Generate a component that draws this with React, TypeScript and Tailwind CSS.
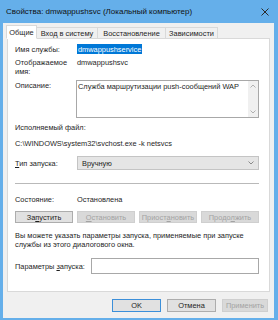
import React from "react";

const Btn = ({
  children,
  disabled,
  primary,
  className = "",
}: {
  children: React.ReactNode;
  disabled?: boolean;
  primary?: boolean;
  className?: string;
}) => (
  <div
    className={
      "flex items-center justify-center whitespace-nowrap " +
      (disabled
        ? "bg-[#d9d9d9] border border-[#cfcfcf] text-[#a3a3a3] "
        : primary
          ? "bg-[#e1e1e1] border border-[#3c8fd9] text-[#1e1e1e] "
          : "bg-[#e1e1e1] border border-[#adadad] text-[#1e1e1e] ") +
      className
    }
  >
    {children}
  </div>
);

export default function App() {
  return (
    <div className="w-[278px] h-[320px] bg-[#65afea] flex flex-col font-['Liberation_Sans',Arial,sans-serif] text-[7.4px] leading-[9px] text-[#1e1e1e] overflow-hidden">
      {/* title bar */}
      <div className="h-[23px] flex items-center pl-[6px] pr-[8px]">
        <span className="flex-1 text-[8px] text-[#111] whitespace-nowrap">
          Свойства: dmwappushsvc (Локальный компьютер)
        </span>
        <svg width="8" height="8" viewBox="0 0 8 8" className="mr-[1px]">
          <path d="M0.5 0.5 L7.5 7.5 M7.5 0.5 L0.5 7.5" stroke="#2a2a2a" strokeWidth="1" />
        </svg>
      </div>

      {/* body */}
      <div className="flex-1 ml-[3px] mr-[4px] mb-[2px] bg-[#f0f0f0] flex flex-col">
        <div className="px-[4px] pt-[2px]">
          {/* tabs */}
          <div className="flex items-end h-[14px] -mb-px relative z-10 whitespace-nowrap">
            <div className="h-[14px] -ml-px w-[31px] bg-white border border-[#d9d9d9] border-b-white flex items-center justify-center">
              Общие
            </div>
            <div className="h-[12px] w-[61px] bg-[#f0f0f0] border border-[#d9d9d9] border-l-0 flex items-center justify-center">
              Вход в систему
            </div>
            <div className="h-[12px] w-[68px] bg-[#f0f0f0] border border-[#d9d9d9] border-l-0 flex items-center justify-center">
              Восстановление
            </div>
            <div className="h-[12px] w-[52px] bg-[#f0f0f0] border border-[#d9d9d9] border-l-0 flex items-center justify-center">
              Зависимости
            </div>
          </div>

          {/* panel */}
          <div className="h-[254px] bg-white border border-[#d9d9d9] pl-[7px] pr-[10px] flex flex-col">
            <div className="flex mt-[5px] h-[10px] items-center">
              <div className="w-[62px]">Имя службы:</div>
              <div className="bg-[#0078d7] text-white h-[10px] flex items-center px-[1px]">
                dmwappushservice
              </div>
            </div>

            <div className="flex mt-[4px]">
              <div className="w-[62px]">
                Отображаемое
                <br />
                имя:
              </div>
              <div>dmwappushsvc</div>
            </div>

            <div className="flex mt-[4px]">
              <div className="w-[61px] pt-[1px]">Описание:</div>
              <div className="flex-1 h-[38px] border border-[#a8a8a8] flex">
                <div className="flex-1 pl-[1px] pt-[1px] whitespace-nowrap">
                  Служба маршрутизации push-сообщений WAP
                </div>
                <div className="w-[10px] bg-[#f0f0f0] flex flex-col items-center justify-between py-[3px]">
                  <svg width="6" height="4" viewBox="0 0 6 4">
                    <path d="M0.5 3.5 L3 1 L5.5 3.5" stroke="#b0b0b0" fill="none" />
                  </svg>
                  <svg width="6" height="4" viewBox="0 0 6 4">
                    <path d="M0.5 0.5 L3 3 L5.5 0.5" stroke="#b0b0b0" fill="none" />
                  </svg>
                </div>
              </div>
            </div>

            <div className="mt-[5px]">Исполняемый файл:</div>
            <div className="mt-[7px] whitespace-nowrap">C:\WINDOWS\system32\svchost.exe -k netsvcs</div>

            <div className="flex items-center mt-[8px]">
              <div className="w-[62px]">
                <span className="underline">Т</span>ип запуска:
              </div>
              <div className="flex-1 h-[14px] bg-[#e5e5e5] border border-[#c4c4c4] flex items-center pl-[4px] pr-[4px]">
                <span className="flex-1">Вручную</span>
                <svg width="6" height="4" viewBox="0 0 6 4">
                  <path d="M0.5 0.5 L3 3 L5.5 0.5" stroke="#8a8a8a" fill="none" />
                </svg>
              </div>
            </div>

            <div className="mt-[13px] h-px bg-[#b9b9b9]" />

            <div className="flex mt-[11px]">
              <div className="w-[62px]">Состояние:</div>
              <div>Остановлена</div>
            </div>

            <div className="grid grid-cols-4 gap-[4px] mt-[7px] h-[12px]">
              <Btn>
                За<span className="underline">п</span>устить
              </Btn>
              <Btn disabled>
                <span className="underline">О</span>становить
              </Btn>
              <Btn disabled>
                Приост<span className="underline">а</span>новить
              </Btn>
              <Btn disabled>
                Продо<span className="underline">л</span>жить
              </Btn>
            </div>

            <div className="mt-[8px] whitespace-nowrap">
              Вы можете указать параметры запуска, применяемые при запуске
              <br />
              службы из этого диалогового окна.
            </div>

            <div className="flex items-center mt-[9px]">
              <div className="w-[76px] whitespace-nowrap">
                Параметры <span className="underline">з</span>апуска:
              </div>
              <div className="flex-1 h-[16px] border border-[#a8a8a8] bg-white" />
            </div>
          </div>
        </div>

        {/* dialog buttons */}
        <div className="flex justify-end gap-[6px] pr-[6px] mt-[7px]">
          <Btn primary className="w-[49px] h-[13px]">
            OK
          </Btn>
          <Btn className="w-[49px] h-[13px]">Отмена</Btn>
          <Btn disabled className="w-[46px] h-[13px]">
            Применить
          </Btn>
        </div>
      </div>
    </div>
  );
}
